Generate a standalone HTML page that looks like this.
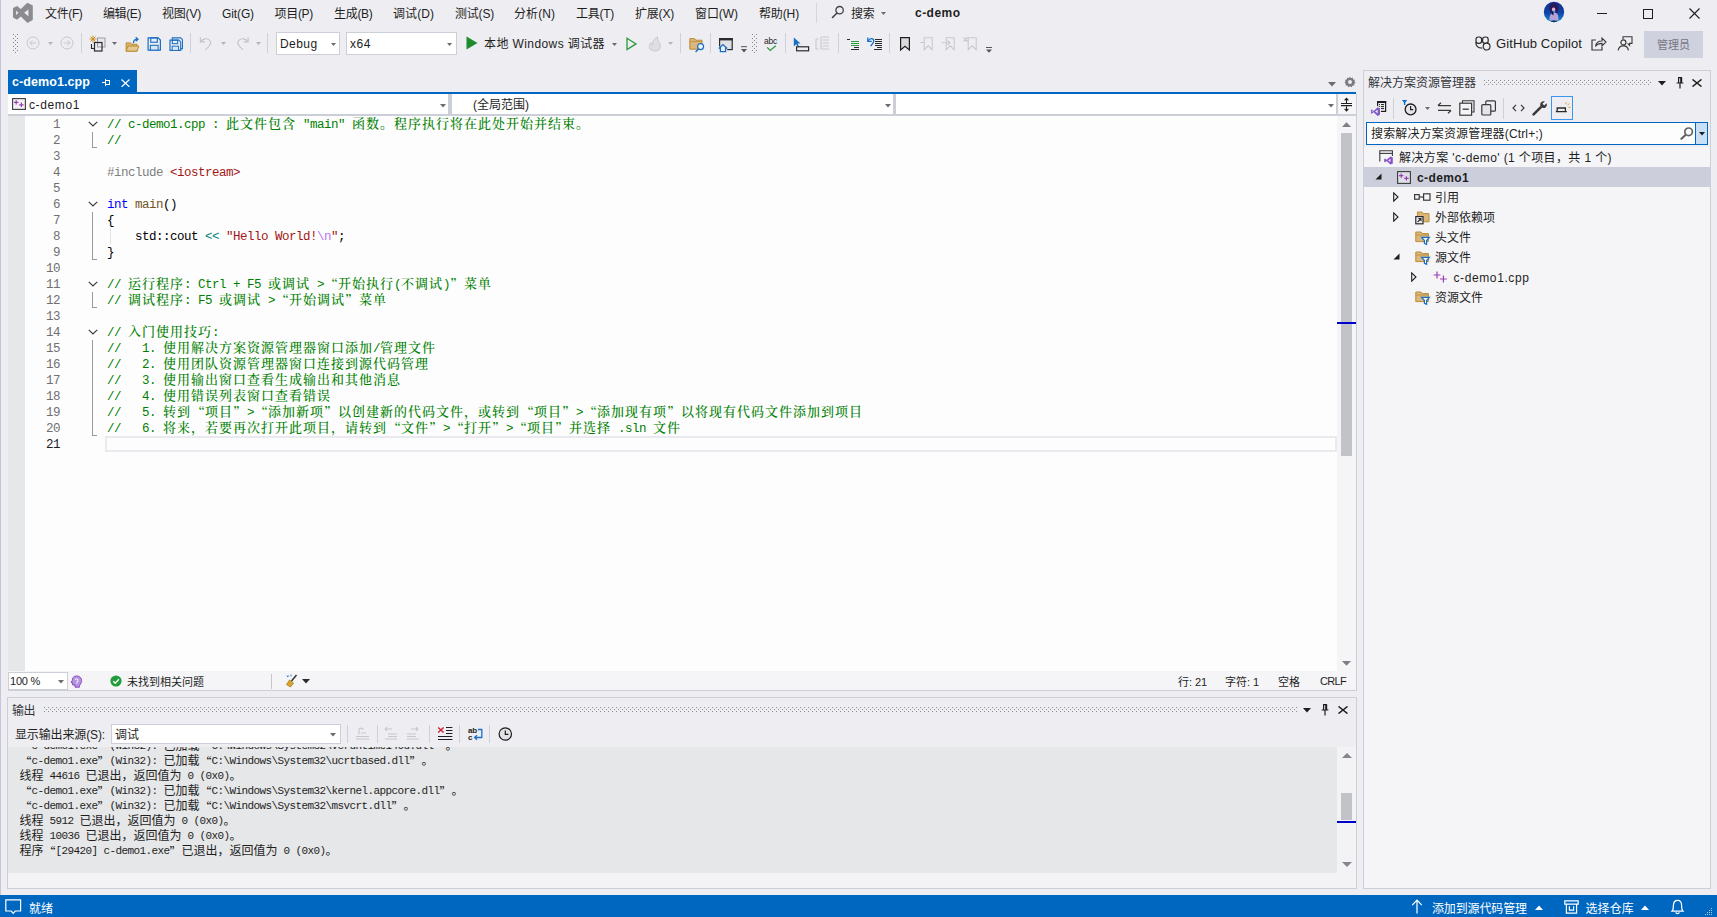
<!DOCTYPE html>
<html lang="zh-CN"><head><meta charset="utf-8"><title>c-demo - Visual Studio</title>
<style>
html,body{margin:0;padding:0}
body{width:1717px;height:917px;overflow:hidden;background:#eeeef2;position:relative;font-family:"Liberation Sans","Noto Sans CJK SC",sans-serif;font-size:12px;color:#1e1e1e}
.a{position:absolute}
.t{position:absolute;white-space:pre}
.m{font-family:"Liberation Mono",monospace}
.s{font-family:"Liberation Serif","Noto Serif CJK SC",serif;font-weight:500}
.g{font-family:"Liberation Sans","Noto Sans CJK SC",sans-serif;font-weight:400}
.qs{font-family:"Noto Serif CJK SC",serif;font-weight:500}
.qg{font-family:"Noto Sans CJK SC",sans-serif}
</style></head>
<body>
<div class="a" style="left:0px;top:0px;width:1px;height:895px;background:#c6c6da;"></div>
<svg class="a" style="left:12px;top:2px" width="22" height="22" viewBox="0 0 22 22"><path d="M15.3 0.8 L20.8 3.6 L20.8 18.1 L15.4 20.9 L8.9 14.6 L5.0 17.8 L1.0 15.6 L1.0 6.1 L5.0 3.9 L8.9 7.1 Z M4.1 8.7 L6.5 10.8 L4.1 13.0 Z M16.4 7.4 L12.2 10.8 L16.4 14.3 Z" fill="#8b8b90" fill-rule="evenodd"/></svg>
<span class="t" id="t0" style="left:45px;top:6.0px;font-size:12px;line-height:16px;color:#1e1e1e;letter-spacing:-0.366px;">文件(F)</span>
<span class="t" id="t1" style="left:103px;top:6.0px;font-size:12px;line-height:16px;color:#1e1e1e;letter-spacing:-0.400px;">编辑(E)</span>
<span class="t" id="t2" style="left:162px;top:6.0px;font-size:12px;line-height:16px;color:#1e1e1e;letter-spacing:-0.200px;">视图(V)</span>
<span class="t" id="t3" style="left:222px;top:6.0px;font-size:12px;line-height:16px;color:#1e1e1e;letter-spacing:-0.112px;">Git(G)</span>
<span class="t" id="t4" style="left:274.5px;top:6.0px;font-size:12px;line-height:16px;color:#1e1e1e;letter-spacing:-0.300px;">项目(P)</span>
<span class="t" id="t5" style="left:334px;top:6.0px;font-size:12px;line-height:16px;color:#1e1e1e;letter-spacing:-0.300px;">生成(B)</span>
<span class="t" id="t6" style="left:393px;top:6.0px;font-size:12px;line-height:16px;color:#1e1e1e;letter-spacing:0.066px;">调试(D)</span>
<span class="t" id="t7" style="left:455px;top:6.0px;font-size:12px;line-height:16px;color:#1e1e1e;letter-spacing:-0.200px;">测试(S)</span>
<span class="t" id="t8" style="left:514px;top:6.0px;font-size:12px;line-height:16px;color:#1e1e1e;letter-spacing:0.066px;">分析(N)</span>
<span class="t" id="t9" style="left:576px;top:6.0px;font-size:12px;line-height:16px;color:#1e1e1e;letter-spacing:-0.266px;">工具(T)</span>
<span class="t" id="t10" style="left:635px;top:6.0px;font-size:12px;line-height:16px;color:#1e1e1e;letter-spacing:-0.200px;">扩展(X)</span>
<span class="t" id="t11" style="left:695px;top:6.0px;font-size:12px;line-height:16px;color:#1e1e1e;letter-spacing:-0.066px;">窗口(W)</span>
<span class="t" id="t12" style="left:759px;top:6.0px;font-size:12px;line-height:16px;color:#1e1e1e;letter-spacing:-0.134px;">帮助(H)</span>
<div class="a" style="left:816px;top:3px;width:1px;height:20px;background:#d6d6de;"></div>
<svg class="a" style="left:831px;top:5px" width="14" height="14" viewBox="0 0 14 14"><circle cx="8.6" cy="5.2" r="3.7" fill="none" stroke="#424242" stroke-width="1.3"/><path d="M6 8 L1.5 12.5" stroke="#424242" stroke-width="1.6" stroke-linecap="round"/></svg>
<span class="t" id="t13" style="left:851px;top:6.0px;font-size:12px;line-height:16px;color:#1e1e1e;letter-spacing:-0.258px;">搜索</span>
<svg class="a" style="left:880.5px;top:12px" width="5" height="3" viewBox="0 0 5 3"><path d="M0 0 H5 L2.5 3 Z" fill="#6a6a72"/></svg>
<span class="t" id="t14" style="left:915px;top:5.0px;font-size:12px;line-height:16px;color:#1e1e1e;font-weight:700;letter-spacing:0.469px;">c-demo</span>
<svg class="a" style="left:1543px;top:1px" width="22" height="22" viewBox="0 0 22 22"><defs><linearGradient id="av" x1="0" y1="0" x2="0" y2="1"><stop offset="0" stop-color="#142a86"/><stop offset="0.55" stop-color="#0f46a8"/><stop offset="1" stop-color="#1296cf"/></linearGradient><clipPath id="avc"><circle cx="11" cy="11" r="10.2"/></clipPath></defs><g clip-path="url(#avc)"><rect width="22" height="22" fill="url(#av)"/><ellipse cx="11" cy="7.2" rx="4.6" ry="5.2" fill="#2a1c58"/><ellipse cx="10.6" cy="8.6" rx="1.7" ry="2" fill="#e3b3cc"/><path d="M10 9.4 L12.4 9.8 L12 12 L10.2 11.4 Z" fill="#4f8fe0"/><path d="M6.4 19.5 C6.4 14.5 8 12 10.4 12.4 C12.2 10.6 15 12.5 15.2 15 L15.6 19.5 Z" fill="#b7a0d8"/><path d="M8.6 13 C8.4 11 9.6 10.2 10.2 11.6 L10.6 14.6 Z" fill="#16153f"/><ellipse cx="11" cy="21.2" rx="3.6" ry="1.6" fill="#0c2a5a"/></g></svg>
<div class="a" style="left:1597px;top:13px;width:10px;height:1px;background:#1e1e1e;"></div>
<div class="a" style="left:1643px;top:9px;width:10px;height:10px;border:1px solid #1e1e1e;box-sizing:border-box;"></div>
<svg class="a" style="left:1689px;top:8px" width="11" height="11" viewBox="0 0 11 11"><path d="M0.5 0.5 L10.5 10.5 M10.5 0.5 L0.5 10.5" stroke="#1e1e1e" stroke-width="1.1"/></svg>
<svg class="a" style="left:13px;top:34px" width="5" height="20" viewBox="0 0 5 20"><rect x="0" y="0" width="1" height="1" fill="#84848e"/><rect x="4" y="0" width="1" height="1" fill="#84848e"/><rect x="2" y="2" width="1" height="1" fill="#84848e"/><rect x="0" y="4" width="1" height="1" fill="#84848e"/><rect x="4" y="4" width="1" height="1" fill="#84848e"/><rect x="2" y="6" width="1" height="1" fill="#84848e"/><rect x="0" y="8" width="1" height="1" fill="#84848e"/><rect x="4" y="8" width="1" height="1" fill="#84848e"/><rect x="2" y="10" width="1" height="1" fill="#84848e"/><rect x="0" y="12" width="1" height="1" fill="#84848e"/><rect x="4" y="12" width="1" height="1" fill="#84848e"/><rect x="2" y="14" width="1" height="1" fill="#84848e"/><rect x="0" y="16" width="1" height="1" fill="#84848e"/><rect x="4" y="16" width="1" height="1" fill="#84848e"/><rect x="2" y="18" width="1" height="1" fill="#84848e"/></svg>
<svg class="a" style="left:25.5px;top:35.5px" width="14" height="14" viewBox="0 0 14 14"><circle cx="7" cy="7" r="6" fill="none" stroke="#c6c6ce"/><path d="M10.2 7 H4 M6.5 4.3 L3.8 7 L6.5 9.7" fill="none" stroke="#c6c6ce"/></svg>
<svg class="a" style="left:47.5px;top:42px" width="5" height="3" viewBox="0 0 5 3"><path d="M0 0 H5 L2.5 3 Z" fill="#b4b4bc"/></svg>
<svg class="a" style="left:59.5px;top:35.5px" width="14" height="14" viewBox="0 0 14 14"><circle cx="7" cy="7" r="6" fill="none" stroke="#c6c6ce"/><path d="M3.8 7 H10 M7.5 4.3 L10.2 7 L7.5 9.7" fill="none" stroke="#c6c6ce"/></svg>
<div class="a" style="left:81px;top:33px;width:1px;height:20px;background:#cfd0da;"></div>
<svg class="a" style="left:89px;top:35px" width="18" height="18" viewBox="0 0 18 18"><path d="M4 0.5 V7.5 M0.5 4 H7.5 M1.5 1.5 L6.5 6.5 M6.5 1.5 L1.5 6.5" stroke="#c78a10" stroke-width="0.9"/><rect x="8.5" y="3" width="7.5" height="9" fill="#e8e8ee" stroke="#9a9aa2" stroke-width="1"/><rect x="5.5" y="7.5" width="7.5" height="8.5" fill="none" stroke="#2a2a2a" stroke-width="1.2"/><path d="M2.5 9 V13.5 H5" fill="none" stroke="#2a2a2a" stroke-width="1.1"/></svg>
<svg class="a" style="left:112.0px;top:42px" width="5" height="3" viewBox="0 0 5 3"><path d="M0 0 H5 L2.5 3 Z" fill="#6a6a72"/></svg>
<svg class="a" style="left:124.5px;top:35.5px" width="15" height="16.5" viewBox="0 0 16 18"><path d="M1 7.5 H6 L7 9 H13 V16.5 H1 Z" fill="#d9b36a" stroke="#b88a2a" stroke-width="1"/><path d="M1 16.5 L3.2 11 H15 L13 16.5 Z" fill="#e3c88f" stroke="#b88a2a" stroke-width="1"/><path d="M9 8 C9 4.5 11 3.5 13.5 3.5 M11.5 1.2 L14 3.5 L11.5 5.8" fill="none" stroke="#1a6fc4" stroke-width="1.4"/></svg>
<svg class="a" style="left:146.5px;top:36.8px" width="14.5" height="14" viewBox="0 0 16 16"><path d="M1 1 H12.5 L15 3.5 V15 H1 Z" fill="none" stroke="#1a6fc4" stroke-width="1.4"/><rect x="4" y="1" width="7.5" height="5" fill="none" stroke="#1a6fc4" stroke-width="1.3"/><rect x="3.6" y="9.5" width="8.8" height="5.5" fill="#dbe6f3" stroke="#1a6fc4" stroke-width="1.2"/></svg>
<svg class="a" style="left:168.7px;top:36.5px" width="14.5" height="14.3" viewBox="0 0 16 16"><path d="M3.5 3 V1 H13 L15 3 V13 H13" fill="none" stroke="#1a6fc4" stroke-width="1.2"/><path d="M1 3.5 H11 L13 5.5 V15 H1 Z" fill="none" stroke="#1a6fc4" stroke-width="1.3"/><rect x="3.6" y="3.5" width="6" height="4" fill="none" stroke="#1a6fc4" stroke-width="1.2"/><rect x="3.4" y="10.3" width="7.2" height="4.7" fill="#dbe6f3" stroke="#1a6fc4" stroke-width="1.1"/></svg>
<div class="a" style="left:190px;top:33px;width:1px;height:20px;background:#cfd0da;"></div>
<svg class="a" style="left:198.5px;top:36.3px" width="14.5" height="14.5" viewBox="0 0 16 16"><path d="M1.5 1.5 V6.5 H6.5" fill="none" stroke="#c2c2ca" stroke-width="1.2"/><path d="M1.8 6.2 C4 3 8.5 1.8 11.5 4.5 C14.5 7.5 12.5 11 7 15" fill="none" stroke="#c2c2ca" stroke-width="1.2"/></svg>
<svg class="a" style="left:220.5px;top:42px" width="5" height="3" viewBox="0 0 5 3"><path d="M0 0 H5 L2.5 3 Z" fill="#b4b4bc"/></svg>
<svg class="a" style="left:234.5px;top:36.3px" width="14.5" height="14.5" viewBox="0 0 16 16"><path d="M14.5 1.5 V6.5 H9.5" fill="none" stroke="#c2c2ca" stroke-width="1.2"/><path d="M14.2 6.2 C12 3 7.5 1.8 4.5 4.5 C1.5 7.5 3.5 11 9 15" fill="none" stroke="#c2c2ca" stroke-width="1.2"/></svg>
<svg class="a" style="left:255.5px;top:42px" width="5" height="3" viewBox="0 0 5 3"><path d="M0 0 H5 L2.5 3 Z" fill="#b4b4bc"/></svg>
<div class="a" style="left:267px;top:33px;width:1px;height:20px;background:#cfd0da;"></div>
<div class="a" style="left:276px;top:32px;width:64px;height:23px;background:#ffffff;border:1px solid #ccced8;box-sizing:border-box;"></div>
<span class="t" id="t15" style="left:280px;top:35.5px;font-size:12px;line-height:16px;color:#1e1e1e;letter-spacing:0.425px;">Debug</span>
<svg class="a" style="left:330.5px;top:43px" width="5" height="3" viewBox="0 0 5 3"><path d="M0 0 H5 L2.5 3 Z" fill="#6a6a72"/></svg>
<div class="a" style="left:346px;top:32px;width:111px;height:23px;background:#ffffff;border:1px solid #ccced8;box-sizing:border-box;"></div>
<span class="t" id="t16" style="left:350px;top:35.5px;font-size:12px;line-height:16px;color:#1e1e1e;letter-spacing:0.547px;">x64</span>
<svg class="a" style="left:447.0px;top:43px" width="5" height="3" viewBox="0 0 5 3"><path d="M0 0 H5 L2.5 3 Z" fill="#6a6a72"/></svg>
<svg class="a" style="left:466px;top:36px" width="12" height="14" viewBox="0 0 12 14"><path d="M0.5 0.5 L11.5 7 L0.5 13.5 Z" fill="#1c8c2c"/></svg>
<span class="t" id="t17" style="left:484px;top:35.5px;font-size:12px;line-height:16px;color:#1e1e1e;letter-spacing:0.403px;">本地 Windows 调试器</span>
<svg class="a" style="left:611.5px;top:43px" width="5" height="3" viewBox="0 0 5 3"><path d="M0 0 H5 L2.5 3 Z" fill="#6a6a72"/></svg>
<svg class="a" style="left:625.5px;top:37px" width="12" height="14" viewBox="0 0 12 14"><path d="M1 1.2 L10 6.9 L1 12.6 Z" fill="none" stroke="#2a9a3a" stroke-width="1.3"/></svg>
<svg class="a" style="left:647px;top:35.5px" width="15" height="16" viewBox="0 0 15 16"><path d="M7.5 15 C2 15 0.8 10 4 6.5 C4.2 8.5 5 9 5.8 9 C5 5.5 7 2.5 10.5 0.8 C9.5 4 13.5 6 13.5 10.5 C13.5 13.5 11 15 7.5 15 Z" fill="#dedee4" stroke="#c6c6ce" stroke-width="0.9"/></svg>
<svg class="a" style="left:668.0px;top:42px" width="5" height="3" viewBox="0 0 5 3"><path d="M0 0 H5 L2.5 3 Z" fill="#b4b4bc"/></svg>
<div class="a" style="left:680px;top:33px;width:1px;height:20px;background:#cfd0da;"></div>
<svg class="a" style="left:689px;top:37px" width="17" height="16" viewBox="0 0 17 16"><path d="M0.8 1.6 H5.6 L6.8 3.2 H13 V12.2 H0.8 Z" fill="#dcb67a" stroke="#b98d3a" stroke-width="1"/><path d="M0.8 4.6 H13" stroke="#b98d3a" stroke-width="0.8"/><circle cx="11.6" cy="9.6" r="3" fill="#f2f5fb" stroke="#1a6fc4" stroke-width="1.2"/><path d="M9.5 11.9 L6.6 15" stroke="#1a6fc4" stroke-width="1.4"/></svg>
<div class="a" style="left:710px;top:33px;width:1px;height:20px;background:#cfd0da;"></div>
<svg class="a" style="left:718px;top:37px" width="16" height="16" viewBox="0 0 16 16"><rect x="1.6" y="1.6" width="12.6" height="11" fill="#e2e2e6" stroke="#2a2a2a" stroke-width="1.2"/><rect x="1" y="1" width="13.8" height="2.4" fill="#2a2a2a"/><path d="M2.2 10.6 H8 V15 H2.2 Z" fill="#eeeef2" stroke="#eeeef2" stroke-width="2.4"/><path d="M0.8 11.4 L5 7.6 L9.2 11.4 M2.4 10.4 V14.6 H7.6 V10.4" fill="none" stroke="#1a6fc4" stroke-width="1.3"/></svg>
<svg class="a" style="left:741px;top:46px" width="6" height="7" viewBox="0 0 6 7"><path d="M0 0.7 H6" stroke="#55555d" stroke-width="1"/><path d="M0 3 H6 L3 6.6 Z" fill="#55555d"/></svg>
<svg class="a" style="left:752px;top:34px" width="5" height="20" viewBox="0 0 5 20"><rect x="0" y="0" width="1" height="1" fill="#84848e"/><rect x="4" y="0" width="1" height="1" fill="#84848e"/><rect x="2" y="2" width="1" height="1" fill="#84848e"/><rect x="0" y="4" width="1" height="1" fill="#84848e"/><rect x="4" y="4" width="1" height="1" fill="#84848e"/><rect x="2" y="6" width="1" height="1" fill="#84848e"/><rect x="0" y="8" width="1" height="1" fill="#84848e"/><rect x="4" y="8" width="1" height="1" fill="#84848e"/><rect x="2" y="10" width="1" height="1" fill="#84848e"/><rect x="0" y="12" width="1" height="1" fill="#84848e"/><rect x="4" y="12" width="1" height="1" fill="#84848e"/><rect x="2" y="14" width="1" height="1" fill="#84848e"/><rect x="0" y="16" width="1" height="1" fill="#84848e"/><rect x="4" y="16" width="1" height="1" fill="#84848e"/><rect x="2" y="18" width="1" height="1" fill="#84848e"/></svg>
<span class="t" id="t18" style="left:764px;top:35.5px;font-size:8.5px;line-height:10px;color:#1e1e1e;letter-spacing:-0.240px;">abc</span>
<svg class="a" style="left:766px;top:45px" width="11" height="7" viewBox="0 0 11 7"><path d="M1.2 2.4 L4.2 5.4 L9.8 0.8" fill="none" stroke="#2a9a3a" stroke-width="1.3"/></svg>
<div class="a" style="left:785px;top:33px;width:1px;height:20px;background:#cfd0da;"></div>
<svg class="a" style="left:793px;top:36.5px" width="17" height="16" viewBox="0 0 17 16"><path d="M0.8 0.6 V9.4 L3.2 7.2 L5 10.6 L6.3 9.9 L4.6 6.6 H7.6 Z" fill="#1a6fc4"/><rect x="3.6" y="9.8" width="12" height="4" fill="#eeeef2" stroke="#2a2a2a" stroke-width="1.2"/></svg>
<svg class="a" style="left:815px;top:36px" width="15" height="16" viewBox="0 0 15 16"><path d="M1 3 V13 M3.5 3 H1 M3.5 13 H1 M6 1 H14 M7.5 4 H14 M7.5 7 H14 M7.5 10 H14 M6 13 H14 M6 1 V13" fill="none" stroke="#c8c8d0" stroke-width="1.1"/></svg>
<div class="a" style="left:838px;top:33px;width:1px;height:20px;background:#cfd0da;"></div>
<svg class="a" style="left:847px;top:39px" width="13" height="11" viewBox="0 0 13 11"><g shape-rendering="crispEdges"><rect x="0" y="0" width="3" height="1" fill="#2a2a2a"/><rect x="4" y="2" width="8" height="1" fill="#2a9a3a"/><rect x="4" y="4" width="8" height="1" fill="#2a9a3a"/><rect x="4" y="6" width="8" height="1" fill="#2a9a3a"/><rect x="7" y="8" width="5" height="1" fill="#2a2a2a"/><rect x="4" y="10" width="8" height="1" fill="#2a2a2a"/></g></svg>
<svg class="a" style="left:866px;top:36px" width="17" height="15" viewBox="0 0 17 15"><path d="M1.8 1.6 V5.4 H5.8" fill="none" stroke="#1a6fc4" stroke-width="1.3"/><path d="M2.2 5 C3.6 1.6 7.8 2 7.8 5 C7.8 7 6.2 8.2 4.6 10" fill="none" stroke="#1a6fc4" stroke-width="1.3"/><g shape-rendering="crispEdges"><rect x="9" y="3" width="7" height="1" fill="#2a2a2a"/><rect x="9" y="5" width="7" height="1" fill="#2a2a2a"/><rect x="9" y="7" width="7" height="1" fill="#2a2a2a"/><rect x="9" y="9" width="7" height="1" fill="#2a2a2a"/><rect x="11" y="11" width="5" height="1" fill="#2a2a2a"/><rect x="8" y="13" width="8" height="1" fill="#2a2a2a"/></g></svg>
<div class="a" style="left:889px;top:33px;width:1px;height:20px;background:#cfd0da;"></div>
<svg class="a" style="left:899px;top:36px" width="12" height="16" viewBox="0 0 12 16"><path d="M1.6 1.6 H10.4 V14 L6 10.2 L1.6 14 Z" fill="#dadade" stroke="#1e1e1e" stroke-width="1.2"/></svg>
<svg class="a" style="left:920px;top:37px" width="14" height="14" viewBox="0 0 14 14"><path d="M4.2 0.8 H12.2 V12.6 L8.2 8.8 L4.2 12.6 Z M0.5 5.5 H4" fill="none" stroke="#c8c8d0" stroke-width="1.1"/></svg>
<svg class="a" style="left:941px;top:37px" width="15" height="14" viewBox="0 0 15 14"><path d="M5.2 0.8 H13.2 V12.6 L9.2 8.8 L5.2 12.6 Z M0.5 5.8 H9 M6.5 3.4 L9 5.8 L6.5 8.2" fill="none" stroke="#c8c8d0" stroke-width="1.1"/></svg>
<svg class="a" style="left:963px;top:37px" width="15" height="14" viewBox="0 0 15 14"><path d="M5.2 0.8 H13.2 V12.6 L9.2 8.8 L5.2 12.6 Z M0.5 0.5 L4.5 4.5 M4.5 0.5 L0.5 4.5" fill="none" stroke="#c8c8d0" stroke-width="1.1"/></svg>
<svg class="a" style="left:985.5px;top:47px" width="6" height="6" viewBox="0 0 6 6"><path d="M0 0.5 H6" stroke="#55555d" stroke-width="1"/><path d="M0 2.5 H6 L3 5.8 Z" fill="#55555d"/></svg>
<svg class="a" style="left:1475px;top:36px" width="16" height="15" viewBox="0 0 16 15"><rect x="1" y="1" width="5.6" height="6.4" rx="2.4" fill="none" stroke="#2a2a2a" stroke-width="1.2"/><rect x="7.6" y="1" width="5.6" height="6.4" rx="2.4" fill="none" stroke="#2a2a2a" stroke-width="1.2"/><path d="M1 6 C0.5 10 3 12.2 7.2 12.2" fill="none" stroke="#2a2a2a" stroke-width="1.2"/><circle cx="11.6" cy="10.6" r="3.4" fill="#eeeef2" stroke="#2a2a2a" stroke-width="1.2"/></svg>
<span class="t" id="t19" style="left:1496px;top:35.5px;font-size:13px;line-height:16px;color:#1e1e1e;letter-spacing:0.104px;">GitHub Copilot</span>
<svg class="a" style="left:1591px;top:36px" width="16" height="15" viewBox="0 0 16 15"><path d="M5 4 H1 V14 H11 V11" fill="none" stroke="#3a3a3a" stroke-width="1.2"/><path d="M4.5 10.5 C5 6.5 8 5 11 5 V2 L15 6 L11 10 V7.4 C8.5 7.4 6.2 8 4.5 10.5 Z" fill="none" stroke="#3a3a3a" stroke-width="1.1"/></svg>
<svg class="a" style="left:1617px;top:36px" width="16" height="15" viewBox="0 0 16 15"><path d="M6 3.2 V0.8 H15 V7.4 H12.6 V9.4 L10.6 7.4" fill="none" stroke="#3a3a3a" stroke-width="1.1"/><circle cx="6.4" cy="6.4" r="2.5" fill="none" stroke="#3a3a3a" stroke-width="1.2"/><path d="M1.2 14.4 C1.6 10.8 4 9.8 6.4 9.8 C8.8 9.8 11 10.8 11.4 14.4" fill="none" stroke="#3a3a3a" stroke-width="1.2"/></svg>
<div class="a" style="left:1644px;top:31px;width:59px;height:27px;background:#d0d1df;"></div>
<span class="t" id="t20" style="left:1657px;top:37.0px;font-size:11px;line-height:16px;color:#76767e;">管理员</span>
<div class="a" style="left:8px;top:70px;width:129px;height:23px;background:#0067c0;"></div>
<span class="t" id="t21" style="left:12px;top:73.5px;font-size:12.5px;line-height:16px;color:#ffffff;font-weight:700;letter-spacing:0.081px;">c-demo1.cpp</span>
<svg class="a" style="left:101px;top:78px" width="10" height="9" viewBox="0 0 10 9"><path d="M1 4.5 H4 M4.5 1 V8 M4 2.5 H9 M8.5 2 V7 M4 6 H9" fill="none" stroke="#ffffff" stroke-width="1" shape-rendering="crispEdges"/><path d="M5 5.5 H8" stroke="#ffffff" stroke-width="1" opacity=".0"/></svg>
<svg class="a" style="left:120.5px;top:79px" width="9" height="8.4" viewBox="0 0 9 8.4"><path d="M0.5 0.5 L8.5 7.9 M8.5 0.5 L0.5 7.9" stroke="#ffffff" stroke-width="1.25"/></svg>
<div class="a" style="left:8px;top:92px;width:1348px;height:2px;background:#0067c0;"></div>
<svg class="a" style="left:1328px;top:82px" width="8" height="5" viewBox="0 0 8 5"><path d="M0 0 H8 L4 4.5 Z" fill="#6a6a72"/><path d="M0 -1.5 H8" stroke="#6a6a72" stroke-width="0"/></svg>
<svg class="a" style="left:1344px;top:76px" width="12" height="12" viewBox="0 0 12 12"><path d="M6 0.6 L7 2.2 L8.8 1.6 L9.2 3.4 L11 3.8 L10.4 5.6 L11.6 6.8 L10.2 7.8 L10.4 9.6 L8.6 9.6 L7.6 11.2 L6 10.2 L4.4 11.2 L3.4 9.6 L1.6 9.6 L1.8 7.8 L0.4 6.8 L1.6 5.6 L1 3.8 L2.8 3.4 L3.2 1.6 L5 2.2 Z" fill="#7a7a84"/><circle cx="6" cy="6" r="2" fill="#eeeef2"/></svg>
<div class="a" style="left:8px;top:94px;width:1349px;height:22px;background:#ccced8;"></div>
<div class="a" style="left:8px;top:94px;width:440px;height:20px;background:#ffffff;"></div>
<div class="a" style="left:452px;top:94px;width:441px;height:20px;background:#ffffff;"></div>
<div class="a" style="left:896px;top:94px;width:440px;height:20px;background:#ffffff;"></div>
<div class="a" style="left:1338px;top:94px;width:18px;height:20px;background:#f5f5f7;"></div>
<svg class="a" style="left:12px;top:98px" width="14" height="12" viewBox="0 0 14 12"><rect x="0.6" y="0.6" width="12.8" height="10.8" fill="#f4f0f6" stroke="#3a3a3a" stroke-width="1.1"/><path d="M4.2 2.2 V6.6 M2 4.4 H6.4 M9.4 4.6 V9 M7.2 6.8 H11.6" stroke="#9b3fb5" stroke-width="1.2"/></svg>
<span class="t" id="t22" style="left:29px;top:96.5px;font-size:12px;line-height:16px;color:#1e1e1e;letter-spacing:0.616px;">c-demo1</span>
<span class="t" id="t23" style="left:473px;top:97.0px;font-size:12px;line-height:16px;color:#1e1e1e;">(全局范围)</span>
<svg class="a" style="left:439.5px;top:104px" width="6" height="4" viewBox="0 0 6 4"><path d="M0 0 H6 L3 3.5 Z" fill="#6a6a72"/></svg>
<svg class="a" style="left:884.5px;top:104px" width="6" height="4" viewBox="0 0 6 4"><path d="M0 0 H6 L3 3.5 Z" fill="#6a6a72"/></svg>
<svg class="a" style="left:1328px;top:104px" width="6" height="4" viewBox="0 0 6 4"><path d="M0 0 H6 L3 3.5 Z" fill="#6a6a72"/></svg>
<svg class="a" style="left:1340px;top:97px" width="14" height="15" viewBox="0 0 14 15"><path d="M1 6.5 H12 M1 8.7 H12" stroke="#1e1e1e" stroke-width="1.2"/><path d="M6.5 6 V1.5 M4.6 3.4 L6.5 1.3 L8.4 3.4 M6.5 9.2 V13.7 M4.6 11.8 L6.5 13.9 L8.4 11.8" fill="none" stroke="#1e1e1e" stroke-width="1.1"/></svg>
<div class="a" style="left:8px;top:116px;width:1348px;height:555px;background:#fdfdfd;"></div>
<div class="a" style="left:8px;top:116px;width:17px;height:555px;background:#e6e7e8;"></div>
<div class="a" style="left:1337px;top:116px;width:19px;height:555px;background:#f5f5f7;"></div>
<div class="a" style="left:1356px;top:94px;width:1px;height:597px;background:#ccced8;"></div>
<div class="a" style="left:1341px;top:133px;width:11px;height:323px;background:#c2c3c9;"></div>
<div class="a" style="left:1337px;top:322px;width:19px;height:2px;background:#0000cd;"></div>
<svg class="a" style="left:1342px;top:122px" width="9" height="5" viewBox="0 0 9 5"><path d="M0 5 H9 L4.5 0.3 Z" fill="#7e7e88"/></svg>
<svg class="a" style="left:1342px;top:661px" width="9" height="5" viewBox="0 0 9 5"><path d="M0 0 H9 L4.5 4.7 Z" fill="#7e7e88"/></svg>
<div class="a" style="left:105px;top:436px;width:1232px;height:16px;border:2px solid #e9e9ef;box-sizing:border-box;"></div>
<span class="t m" style="left:53px;top:117.0px;font-size:12.5px;line-height:16px;color:#707070;letter-spacing:-0.501px">1</span>
<span class="t m" style="left:107px;top:117.0px;font-size:12.5px;line-height:16px;color:#008000;letter-spacing:-0.501px">// c-demo1.cpp : </span>
<span class="t s" style="left:226px;top:116.0px;font-size:13px;line-height:16px;color:#008000;letter-spacing:1.000px">此文件包含</span>
<span class="t m" style="left:296px;top:117.0px;font-size:12.5px;line-height:16px;color:#008000;letter-spacing:-0.501px"> "main" </span>
<span class="t s" style="left:352px;top:116.0px;font-size:13px;line-height:16px;color:#008000;letter-spacing:1.000px">函数。程序执行将在此处开始并结束。</span>
<span class="t m" style="left:53px;top:133.0px;font-size:12.5px;line-height:16px;color:#707070;letter-spacing:-0.501px">2</span>
<span class="t m" style="left:107px;top:133.0px;font-size:12.5px;line-height:16px;color:#008000;letter-spacing:-0.501px">//</span>
<span class="t m" style="left:53px;top:149.0px;font-size:12.5px;line-height:16px;color:#707070;letter-spacing:-0.501px">3</span>
<span class="t m" style="left:53px;top:165.0px;font-size:12.5px;line-height:16px;color:#707070;letter-spacing:-0.501px">4</span>
<span class="t m" style="left:107px;top:165.0px;font-size:12.5px;line-height:16px;color:#808080;letter-spacing:-0.501px">#include </span>
<span class="t m" style="left:170px;top:165.0px;font-size:12.5px;line-height:16px;color:#a31515;letter-spacing:-0.501px">&lt;iostream&gt;</span>
<span class="t m" style="left:53px;top:181.0px;font-size:12.5px;line-height:16px;color:#707070;letter-spacing:-0.501px">5</span>
<span class="t m" style="left:53px;top:197.0px;font-size:12.5px;line-height:16px;color:#707070;letter-spacing:-0.501px">6</span>
<span class="t m" style="left:107px;top:197.0px;font-size:12.5px;line-height:16px;color:#0000ff;letter-spacing:-0.501px">int</span>
<span class="t m" style="left:135px;top:197.0px;font-size:12.5px;line-height:16px;color:#74531f;letter-spacing:-0.501px">main</span>
<span class="t m" style="left:163px;top:197.0px;font-size:12.5px;line-height:16px;color:#000000;letter-spacing:-0.501px">()</span>
<span class="t m" style="left:53px;top:213.0px;font-size:12.5px;line-height:16px;color:#707070;letter-spacing:-0.501px">7</span>
<span class="t m" style="left:107px;top:213.0px;font-size:12.5px;line-height:16px;color:#000000;letter-spacing:-0.501px">{</span>
<span class="t m" style="left:53px;top:229.0px;font-size:12.5px;line-height:16px;color:#707070;letter-spacing:-0.501px">8</span>
<span class="t m" style="left:107px;top:229.0px;font-size:12.5px;line-height:16px;color:#000000;letter-spacing:-0.501px">    std::cout </span>
<span class="t m" style="left:205px;top:229.0px;font-size:12.5px;line-height:16px;color:#008080;letter-spacing:-0.501px">&lt;&lt;</span>
<span class="t m" style="left:226px;top:229.0px;font-size:12.5px;line-height:16px;color:#a31515;letter-spacing:-0.501px">"Hello World!</span>
<span class="t m" style="left:317px;top:229.0px;font-size:12.5px;line-height:16px;color:#b776fb;letter-spacing:-0.501px">\n</span>
<span class="t m" style="left:331px;top:229.0px;font-size:12.5px;line-height:16px;color:#a31515;letter-spacing:-0.501px">"</span>
<span class="t m" style="left:338px;top:229.0px;font-size:12.5px;line-height:16px;color:#000000;letter-spacing:-0.501px">;</span>
<span class="t m" style="left:53px;top:245.0px;font-size:12.5px;line-height:16px;color:#707070;letter-spacing:-0.501px">9</span>
<span class="t m" style="left:107px;top:245.0px;font-size:12.5px;line-height:16px;color:#000000;letter-spacing:-0.501px">}</span>
<span class="t m" style="left:46px;top:261.0px;font-size:12.5px;line-height:16px;color:#707070;letter-spacing:-0.501px">10</span>
<span class="t m" style="left:46px;top:277.0px;font-size:12.5px;line-height:16px;color:#707070;letter-spacing:-0.501px">11</span>
<span class="t m" style="left:107px;top:277.0px;font-size:12.5px;line-height:16px;color:#008000;letter-spacing:-0.501px">// </span>
<span class="t s" style="left:128px;top:276.0px;font-size:13px;line-height:16px;color:#008000;letter-spacing:1.000px">运行程序</span>
<span class="t m" style="left:184px;top:277.0px;font-size:12.5px;line-height:16px;color:#008000;letter-spacing:-0.501px">: Ctrl + F5 </span>
<span class="t s" style="left:268px;top:276.0px;font-size:13px;line-height:16px;color:#008000;letter-spacing:1.000px">或调试</span>
<span class="t m" style="left:310px;top:277.0px;font-size:12.5px;line-height:16px;color:#008000;letter-spacing:-0.501px"> &gt;</span>
<span class="t qs" style="left:324px;top:276.0px;width:14px;text-align:right;font-size:13px;line-height:16px;color:#008000">“</span>
<span class="t s" style="left:338px;top:276.0px;font-size:13px;line-height:16px;color:#008000;letter-spacing:1.000px">开始执行</span>
<span class="t m" style="left:394px;top:277.0px;font-size:12.5px;line-height:16px;color:#008000;letter-spacing:-0.501px">(</span>
<span class="t s" style="left:401px;top:276.0px;font-size:13px;line-height:16px;color:#008000;letter-spacing:1.000px">不调试</span>
<span class="t m" style="left:443px;top:277.0px;font-size:12.5px;line-height:16px;color:#008000;letter-spacing:-0.501px">)</span>
<span class="t qs" style="left:450px;top:276.0px;width:14px;text-align:left;font-size:13px;line-height:16px;color:#008000">”</span>
<span class="t s" style="left:464px;top:276.0px;font-size:13px;line-height:16px;color:#008000;letter-spacing:1.000px">菜单</span>
<span class="t m" style="left:46px;top:293.0px;font-size:12.5px;line-height:16px;color:#707070;letter-spacing:-0.501px">12</span>
<span class="t m" style="left:107px;top:293.0px;font-size:12.5px;line-height:16px;color:#008000;letter-spacing:-0.501px">// </span>
<span class="t s" style="left:128px;top:292.0px;font-size:13px;line-height:16px;color:#008000;letter-spacing:1.000px">调试程序</span>
<span class="t m" style="left:184px;top:293.0px;font-size:12.5px;line-height:16px;color:#008000;letter-spacing:-0.501px">: F5 </span>
<span class="t s" style="left:219px;top:292.0px;font-size:13px;line-height:16px;color:#008000;letter-spacing:1.000px">或调试</span>
<span class="t m" style="left:261px;top:293.0px;font-size:12.5px;line-height:16px;color:#008000;letter-spacing:-0.501px"> &gt;</span>
<span class="t qs" style="left:275px;top:292.0px;width:14px;text-align:right;font-size:13px;line-height:16px;color:#008000">“</span>
<span class="t s" style="left:289px;top:292.0px;font-size:13px;line-height:16px;color:#008000;letter-spacing:1.000px">开始调试</span>
<span class="t qs" style="left:345px;top:292.0px;width:14px;text-align:left;font-size:13px;line-height:16px;color:#008000">”</span>
<span class="t s" style="left:359px;top:292.0px;font-size:13px;line-height:16px;color:#008000;letter-spacing:1.000px">菜单</span>
<span class="t m" style="left:46px;top:309.0px;font-size:12.5px;line-height:16px;color:#707070;letter-spacing:-0.501px">13</span>
<span class="t m" style="left:46px;top:325.0px;font-size:12.5px;line-height:16px;color:#707070;letter-spacing:-0.501px">14</span>
<span class="t m" style="left:107px;top:325.0px;font-size:12.5px;line-height:16px;color:#008000;letter-spacing:-0.501px">// </span>
<span class="t s" style="left:128px;top:324.0px;font-size:13px;line-height:16px;color:#008000;letter-spacing:1.000px">入门使用技巧</span>
<span class="t m" style="left:212px;top:325.0px;font-size:12.5px;line-height:16px;color:#008000;letter-spacing:-0.501px">: </span>
<span class="t m" style="left:46px;top:341.0px;font-size:12.5px;line-height:16px;color:#707070;letter-spacing:-0.501px">15</span>
<span class="t m" style="left:107px;top:341.0px;font-size:12.5px;line-height:16px;color:#008000;letter-spacing:-0.501px">//   1. </span>
<span class="t s" style="left:163px;top:340.0px;font-size:13px;line-height:16px;color:#008000;letter-spacing:1.000px">使用解决方案资源管理器窗口添加</span>
<span class="t m" style="left:373px;top:341.0px;font-size:12.5px;line-height:16px;color:#008000;letter-spacing:-0.501px">/</span>
<span class="t s" style="left:380px;top:340.0px;font-size:13px;line-height:16px;color:#008000;letter-spacing:1.000px">管理文件</span>
<span class="t m" style="left:46px;top:357.0px;font-size:12.5px;line-height:16px;color:#707070;letter-spacing:-0.501px">16</span>
<span class="t m" style="left:107px;top:357.0px;font-size:12.5px;line-height:16px;color:#008000;letter-spacing:-0.501px">//   2. </span>
<span class="t s" style="left:163px;top:356.0px;font-size:13px;line-height:16px;color:#008000;letter-spacing:1.000px">使用团队资源管理器窗口连接到源代码管理</span>
<span class="t m" style="left:46px;top:373.0px;font-size:12.5px;line-height:16px;color:#707070;letter-spacing:-0.501px">17</span>
<span class="t m" style="left:107px;top:373.0px;font-size:12.5px;line-height:16px;color:#008000;letter-spacing:-0.501px">//   3. </span>
<span class="t s" style="left:163px;top:372.0px;font-size:13px;line-height:16px;color:#008000;letter-spacing:1.000px">使用输出窗口查看生成输出和其他消息</span>
<span class="t m" style="left:46px;top:389.0px;font-size:12.5px;line-height:16px;color:#707070;letter-spacing:-0.501px">18</span>
<span class="t m" style="left:107px;top:389.0px;font-size:12.5px;line-height:16px;color:#008000;letter-spacing:-0.501px">//   4. </span>
<span class="t s" style="left:163px;top:388.0px;font-size:13px;line-height:16px;color:#008000;letter-spacing:1.000px">使用错误列表窗口查看错误</span>
<span class="t m" style="left:46px;top:405.0px;font-size:12.5px;line-height:16px;color:#707070;letter-spacing:-0.501px">19</span>
<span class="t m" style="left:107px;top:405.0px;font-size:12.5px;line-height:16px;color:#008000;letter-spacing:-0.501px">//   5. </span>
<span class="t s" style="left:163px;top:404.0px;font-size:13px;line-height:16px;color:#008000;letter-spacing:1.000px">转到</span>
<span class="t qs" style="left:191px;top:404.0px;width:14px;text-align:right;font-size:13px;line-height:16px;color:#008000">“</span>
<span class="t s" style="left:205px;top:404.0px;font-size:13px;line-height:16px;color:#008000;letter-spacing:1.000px">项目</span>
<span class="t qs" style="left:233px;top:404.0px;width:14px;text-align:left;font-size:13px;line-height:16px;color:#008000">”</span>
<span class="t m" style="left:247px;top:405.0px;font-size:12.5px;line-height:16px;color:#008000;letter-spacing:-0.501px">&gt;</span>
<span class="t qs" style="left:254px;top:404.0px;width:14px;text-align:right;font-size:13px;line-height:16px;color:#008000">“</span>
<span class="t s" style="left:268px;top:404.0px;font-size:13px;line-height:16px;color:#008000;letter-spacing:1.000px">添加新项</span>
<span class="t qs" style="left:324px;top:404.0px;width:14px;text-align:left;font-size:13px;line-height:16px;color:#008000">”</span>
<span class="t s" style="left:338px;top:404.0px;font-size:13px;line-height:16px;color:#008000;letter-spacing:1.000px">以创建新的代码文件，或转到</span>
<span class="t qs" style="left:520px;top:404.0px;width:14px;text-align:right;font-size:13px;line-height:16px;color:#008000">“</span>
<span class="t s" style="left:534px;top:404.0px;font-size:13px;line-height:16px;color:#008000;letter-spacing:1.000px">项目</span>
<span class="t qs" style="left:562px;top:404.0px;width:14px;text-align:left;font-size:13px;line-height:16px;color:#008000">”</span>
<span class="t m" style="left:576px;top:405.0px;font-size:12.5px;line-height:16px;color:#008000;letter-spacing:-0.501px">&gt;</span>
<span class="t qs" style="left:583px;top:404.0px;width:14px;text-align:right;font-size:13px;line-height:16px;color:#008000">“</span>
<span class="t s" style="left:597px;top:404.0px;font-size:13px;line-height:16px;color:#008000;letter-spacing:1.000px">添加现有项</span>
<span class="t qs" style="left:667px;top:404.0px;width:14px;text-align:left;font-size:13px;line-height:16px;color:#008000">”</span>
<span class="t s" style="left:681px;top:404.0px;font-size:13px;line-height:16px;color:#008000;letter-spacing:1.000px">以将现有代码文件添加到项目</span>
<span class="t m" style="left:46px;top:421.0px;font-size:12.5px;line-height:16px;color:#707070;letter-spacing:-0.501px">20</span>
<span class="t m" style="left:107px;top:421.0px;font-size:12.5px;line-height:16px;color:#008000;letter-spacing:-0.501px">//   6. </span>
<span class="t s" style="left:163px;top:420.0px;font-size:13px;line-height:16px;color:#008000;letter-spacing:1.000px">将来，若要再次打开此项目，请转到</span>
<span class="t qs" style="left:387px;top:420.0px;width:14px;text-align:right;font-size:13px;line-height:16px;color:#008000">“</span>
<span class="t s" style="left:401px;top:420.0px;font-size:13px;line-height:16px;color:#008000;letter-spacing:1.000px">文件</span>
<span class="t qs" style="left:429px;top:420.0px;width:14px;text-align:left;font-size:13px;line-height:16px;color:#008000">”</span>
<span class="t m" style="left:443px;top:421.0px;font-size:12.5px;line-height:16px;color:#008000;letter-spacing:-0.501px">&gt;</span>
<span class="t qs" style="left:450px;top:420.0px;width:14px;text-align:right;font-size:13px;line-height:16px;color:#008000">“</span>
<span class="t s" style="left:464px;top:420.0px;font-size:13px;line-height:16px;color:#008000;letter-spacing:1.000px">打开</span>
<span class="t qs" style="left:492px;top:420.0px;width:14px;text-align:left;font-size:13px;line-height:16px;color:#008000">”</span>
<span class="t m" style="left:506px;top:421.0px;font-size:12.5px;line-height:16px;color:#008000;letter-spacing:-0.501px">&gt;</span>
<span class="t qs" style="left:513px;top:420.0px;width:14px;text-align:right;font-size:13px;line-height:16px;color:#008000">“</span>
<span class="t s" style="left:527px;top:420.0px;font-size:13px;line-height:16px;color:#008000;letter-spacing:1.000px">项目</span>
<span class="t qs" style="left:555px;top:420.0px;width:14px;text-align:left;font-size:13px;line-height:16px;color:#008000">”</span>
<span class="t s" style="left:569px;top:420.0px;font-size:13px;line-height:16px;color:#008000;letter-spacing:1.000px">并选择</span>
<span class="t m" style="left:611px;top:421.0px;font-size:12.5px;line-height:16px;color:#008000;letter-spacing:-0.501px"> .sln </span>
<span class="t s" style="left:653px;top:420.0px;font-size:13px;line-height:16px;color:#008000;letter-spacing:1.000px">文件</span>
<span class="t m" style="left:46px;top:437.0px;font-size:12.5px;line-height:16px;color:#1e1e1e;letter-spacing:-0.501px">21</span>
<svg class="a" style="left:88px;top:121px" width="10" height="6" viewBox="0 0 10 6"><path d="M0.8 0.8 L5 5 L9.2 0.8" fill="none" stroke="#3a3a3a" stroke-width="1.2"/></svg>
<div class="a" style="left:92px;top:132px;width:1px;height:15px;background:#9a9a9a;"></div>
<div class="a" style="left:92px;top:147px;width:5px;height:1px;background:#9a9a9a;"></div>
<svg class="a" style="left:88px;top:201px" width="10" height="6" viewBox="0 0 10 6"><path d="M0.8 0.8 L5 5 L9.2 0.8" fill="none" stroke="#3a3a3a" stroke-width="1.2"/></svg>
<div class="a" style="left:92px;top:212px;width:1px;height:47px;background:#9a9a9a;"></div>
<div class="a" style="left:92px;top:259px;width:5px;height:1px;background:#9a9a9a;"></div>
<svg class="a" style="left:88px;top:281px" width="10" height="6" viewBox="0 0 10 6"><path d="M0.8 0.8 L5 5 L9.2 0.8" fill="none" stroke="#3a3a3a" stroke-width="1.2"/></svg>
<div class="a" style="left:92px;top:292px;width:1px;height:15px;background:#9a9a9a;"></div>
<div class="a" style="left:92px;top:307px;width:5px;height:1px;background:#9a9a9a;"></div>
<svg class="a" style="left:88px;top:329px" width="10" height="6" viewBox="0 0 10 6"><path d="M0.8 0.8 L5 5 L9.2 0.8" fill="none" stroke="#3a3a3a" stroke-width="1.2"/></svg>
<div class="a" style="left:92px;top:340px;width:1px;height:95px;background:#9a9a9a;"></div>
<div class="a" style="left:92px;top:435px;width:5px;height:1px;background:#9a9a9a;"></div>
<div class="a" style="left:110px;top:228px;width:1px;height:16px;background:#e2e2e2;"></div>
<div class="a" style="left:8px;top:671px;width:1348px;height:19px;background:#f5f5f7;"></div>
<div class="a" style="left:8px;top:690px;width:1349px;height:1px;background:#ccced8;"></div>
<div class="a" style="left:8px;top:672px;width:60px;height:18px;background:#ffffff;border:1px solid #ccced8;box-sizing:border-box;"></div>
<span class="t" id="t24" style="left:10px;top:673.0px;font-size:11px;line-height:16px;color:#1e1e1e;letter-spacing:-0.241px;">100 %</span>
<svg class="a" style="left:58px;top:680px" width="6" height="4" viewBox="0 0 6 4"><path d="M0 0 H6 L3 3.5 Z" fill="#6a6a72"/></svg>
<svg class="a" style="left:70px;top:675px" width="13" height="13" viewBox="0 0 13 13"><path d="M6.6 1 C10 1 12 3.4 11.6 6.4 C11.2 8.8 9.4 9.4 9.4 12.2 H5 V10 H2.6 V7.6 H1 L2.4 5.2 C2.2 3 3.6 1 6.6 1 Z" fill="#b493e0" stroke="#8a4fc0" stroke-width="1"/><path d="M5 4.6 C6 3.4 8.2 4 8 5.6 C7.8 7 6.6 7 6.6 8.6" fill="none" stroke="#f3ecfb" stroke-width="1.1"/></svg>
<svg class="a" style="left:110px;top:675px" width="12" height="12" viewBox="0 0 12 12"><circle cx="6" cy="6" r="5.6" fill="#1f9d3a"/><path d="M3.2 6.2 L5.2 8.2 L8.9 4.2" fill="none" stroke="#fff" stroke-width="1.4"/></svg>
<span class="t" id="t25" style="left:127px;top:674.0px;font-size:11px;line-height:16px;color:#1e1e1e;">未找到相关问题</span>
<div class="a" style="left:271px;top:674px;width:1px;height:15px;background:#c6c6ce;"></div>
<svg class="a" style="left:285px;top:674px" width="13" height="14" viewBox="0 0 13 14"><path d="M11.5 1 L6.5 7" stroke="#3a3a3a" stroke-width="1.6"/><path d="M4.5 6 L8.5 9 L5.5 13 L1.5 10.5 Z" fill="#d9a532" stroke="#a87a1a" stroke-width="0.8"/><path d="M2 1.5 L3.5 3 M3.5 1.5 L2 3 M6 0.5 V2.5" stroke="#1a6fc4" stroke-width="0.9"/></svg>
<svg class="a" style="left:302px;top:679px" width="8" height="5" viewBox="0 0 8 5"><path d="M0 0 H8 L4 4.5 Z" fill="#2a2a2a"/></svg>
<span class="t" id="t26" style="left:1178px;top:674.0px;font-size:11px;line-height:16px;color:#1e1e1e;letter-spacing:-0.072px;">行: 21</span>
<span class="t" id="t27" style="left:1225px;top:674.0px;font-size:11px;line-height:16px;color:#1e1e1e;letter-spacing:-0.047px;">字符: 1</span>
<span class="t" id="t28" style="left:1278px;top:674.0px;font-size:11px;line-height:16px;color:#1e1e1e;">空格</span>
<span class="t" id="t29" style="left:1320px;top:673.0px;font-size:11px;line-height:16px;color:#1e1e1e;letter-spacing:-0.684px;">CRLF</span>
<div class="a" style="left:7px;top:697px;width:1350px;height:192px;background:#eeeef2;border:1px solid #ccced8;box-sizing:border-box;"></div>
<span class="t" id="t30" style="left:12px;top:702.5px;font-size:12px;line-height:16px;color:#33353b;letter-spacing:-0.508px;">输出</span>
<svg class="a" style="left:44px;top:707px" width="1254" height="5" shape-rendering="crispEdges"><defs><pattern id="gp1" width="4" height="4" patternUnits="userSpaceOnUse"><rect x="0" y="0" width="1" height="1" fill="#8c8c94"/><rect x="2" y="2" width="1" height="1" fill="#8c8c94"/></pattern></defs><rect width="1254" height="5" fill="url(#gp1)"/></svg>
<svg class="a" style="left:1303px;top:708px" width="8" height="5" viewBox="0 0 8 5"><path d="M0 0 H8 L4 4.5 Z" fill="#1e1e1e"/></svg>
<svg class="a" style="left:1321px;top:704px" width="8" height="12" viewBox="0 0 8 12"><path d="M2 0.6 H6 M2.6 0.6 V5.8 M5.6 0.6 V5.8 M0.6 6 H7.4 M4 6 V11.5" fill="none" stroke="#1e1e1e" stroke-width="1.2"/><path d="M5 0.6 V6" stroke="#1e1e1e" stroke-width="1.6"/></svg>
<svg class="a" style="left:1338px;top:706px" width="10" height="8" viewBox="0 0 10 8"><path d="M0.5 0.4 L9.5 7.6 M9.5 0.4 L0.5 7.6" stroke="#1e1e1e" stroke-width="1.4"/></svg>
<span class="t" id="t31" style="left:15px;top:726.5px;font-size:12px;line-height:16px;color:#1e1e1e;letter-spacing:-0.134px;">显示输出来源(S):</span>
<div class="a" style="left:111px;top:724px;width:230px;height:20px;background:#ffffff;border:1px solid #ccced8;box-sizing:border-box;"></div>
<span class="t" id="t32" style="left:115px;top:726.5px;font-size:12px;line-height:16px;color:#1e1e1e;letter-spacing:-0.008px;">调试</span>
<svg class="a" style="left:330px;top:733px" width="6" height="4" viewBox="0 0 6 4"><path d="M0 0 H6 L3 3.5 Z" fill="#6a6a72"/></svg>
<div class="a" style="left:347px;top:725px;width:1px;height:18px;background:#cfd0da;"></div>
<svg class="a" style="left:355px;top:726px" width="15" height="15" viewBox="0 0 15 15"><path d="M4 8.5 V4 C4 1.5 8 1.5 8 4 M1 10.5 H14 M1 13 H14 M6 7 H11" fill="none" stroke="#c6c6ce" stroke-width="1.1"/></svg>
<div class="a" style="left:377px;top:725px;width:1px;height:18px;background:#cfd0da;"></div>
<svg class="a" style="left:384px;top:726px" width="14" height="15" viewBox="0 0 14 15"><path d="M1 3 H8 M1 3 L3 1.2 M1 3 L3 4.8 M4 8 H13 M4 10.5 H13 M1 13 H13" fill="none" stroke="#c6c6ce" stroke-width="1.1"/></svg>
<svg class="a" style="left:406px;top:726px" width="14" height="15" viewBox="0 0 14 15"><path d="M5 3 H12 M12 3 L10 1.2 M12 3 L10 4.8 M1 8 H10 M1 10.5 H10 M1 13 H13" fill="none" stroke="#c6c6ce" stroke-width="1.1"/></svg>
<div class="a" style="left:429px;top:725px;width:1px;height:18px;background:#cfd0da;"></div>
<svg class="a" style="left:437px;top:726px" width="16" height="15" viewBox="0 0 16 15"><path d="M1.2 1.4 L6.6 6.6 M6.6 1.4 L1.2 6.6" stroke="#d0202a" stroke-width="1.4"/><path d="M9 1.5 H15.4 M9 4.5 H15.4 M9 7.5 H15.4 M1 10.5 H15.4 M1 13.5 H15.4" stroke="#1e1e1e" stroke-width="1.1"/></svg>
<div class="a" style="left:459px;top:725px;width:1px;height:18px;background:#cfd0da;"></div>
<span class="t" id="t33" style="left:468px;top:725.5px;font-size:8px;line-height:9px;color:#1e1e1e;font-weight:700;letter-spacing:-0.172px;">ab</span>
<span class="t" id="t34" style="left:468px;top:733.0px;font-size:8px;line-height:9px;color:#1e1e1e;font-weight:700;">c</span>
<svg class="a" style="left:473px;top:727px" width="10" height="14" viewBox="0 0 10 14"><path d="M5 2.5 H8.8 V10.5 H2 M4 8.2 L1.6 10.5 L4 12.8" fill="none" stroke="#1a6fc4" stroke-width="1.3"/></svg>
<div class="a" style="left:489px;top:725px;width:1px;height:18px;background:#cfd0da;"></div>
<svg class="a" style="left:498px;top:727px" width="15" height="15" viewBox="0 0 15 15"><circle cx="7.3" cy="7" r="6.2" fill="#e2e2e6" stroke="#1e1e1e" stroke-width="1.2"/><path d="M7.3 3.4 V7.3 H10.4" fill="none" stroke="#1e1e1e" stroke-width="1.2"/></svg>
<div class="a" id="outpane" style="left:8px;top:747px;width:1329px;height:126px;background:#e6e7e8;overflow:hidden"><span class="t qg" style="left:11.5px;top:-8.5px;width:12px;text-align:right;font-size:12px;line-height:15px;color:#1e1e1e">“</span>
<span class="t m" style="left:23.5px;top:-8.0px;font-size:11px;line-height:15px;color:#1e1e1e;letter-spacing:-0.601px">c-demo1.exe</span>
<span class="t qg" style="left:89.5px;top:-8.5px;width:12px;text-align:left;font-size:12px;line-height:15px;color:#1e1e1e">”</span>
<span class="t m" style="left:101.5px;top:-8.0px;font-size:11px;line-height:15px;color:#1e1e1e;letter-spacing:-0.601px">(Win32): </span>
<span class="t g" style="left:155.5px;top:-8.5px;font-size:12px;line-height:15px;color:#1e1e1e;letter-spacing:0.000px">已加载</span>
<span class="t qg" style="left:191.5px;top:-8.5px;width:12px;text-align:right;font-size:12px;line-height:15px;color:#1e1e1e">“</span>
<span class="t m" style="left:203.5px;top:-8.0px;font-size:11px;line-height:15px;color:#1e1e1e;letter-spacing:-0.601px">C:\Windows\System32\vcruntime140d.dll</span>
<span class="t qg" style="left:425.5px;top:-8.5px;width:12px;text-align:left;font-size:12px;line-height:15px;color:#1e1e1e">”</span>
<span class="t g" style="left:437.5px;top:-8.5px;font-size:12px;line-height:15px;color:#1e1e1e;letter-spacing:0.000px">。</span>
<span class="t qg" style="left:11.5px;top:6.5px;width:12px;text-align:right;font-size:12px;line-height:15px;color:#1e1e1e">“</span>
<span class="t m" style="left:23.5px;top:7.0px;font-size:11px;line-height:15px;color:#1e1e1e;letter-spacing:-0.601px">c-demo1.exe</span>
<span class="t qg" style="left:89.5px;top:6.5px;width:12px;text-align:left;font-size:12px;line-height:15px;color:#1e1e1e">”</span>
<span class="t m" style="left:101.5px;top:7.0px;font-size:11px;line-height:15px;color:#1e1e1e;letter-spacing:-0.601px">(Win32): </span>
<span class="t g" style="left:155.5px;top:6.5px;font-size:12px;line-height:15px;color:#1e1e1e;letter-spacing:0.000px">已加载</span>
<span class="t qg" style="left:191.5px;top:6.5px;width:12px;text-align:right;font-size:12px;line-height:15px;color:#1e1e1e">“</span>
<span class="t m" style="left:203.5px;top:7.0px;font-size:11px;line-height:15px;color:#1e1e1e;letter-spacing:-0.601px">C:\Windows\System32\ucrtbased.dll</span>
<span class="t qg" style="left:401.5px;top:6.5px;width:12px;text-align:left;font-size:12px;line-height:15px;color:#1e1e1e">”</span>
<span class="t g" style="left:413.5px;top:6.5px;font-size:12px;line-height:15px;color:#1e1e1e;letter-spacing:0.000px">。</span>
<span class="t g" style="left:11.5px;top:21.5px;font-size:12px;line-height:15px;color:#1e1e1e;letter-spacing:0.000px">线程</span>
<span class="t m" style="left:35.5px;top:22.0px;font-size:11px;line-height:15px;color:#1e1e1e;letter-spacing:-0.601px"> 44616 </span>
<span class="t g" style="left:77.5px;top:21.5px;font-size:12px;line-height:15px;color:#1e1e1e;letter-spacing:0.000px">已退出，返回值为</span>
<span class="t m" style="left:173.5px;top:22.0px;font-size:11px;line-height:15px;color:#1e1e1e;letter-spacing:-0.601px"> 0 (0x0)</span>
<span class="t g" style="left:221.5px;top:21.5px;font-size:12px;line-height:15px;color:#1e1e1e;letter-spacing:0.000px">。</span>
<span class="t qg" style="left:11.5px;top:36.5px;width:12px;text-align:right;font-size:12px;line-height:15px;color:#1e1e1e">“</span>
<span class="t m" style="left:23.5px;top:37.0px;font-size:11px;line-height:15px;color:#1e1e1e;letter-spacing:-0.601px">c-demo1.exe</span>
<span class="t qg" style="left:89.5px;top:36.5px;width:12px;text-align:left;font-size:12px;line-height:15px;color:#1e1e1e">”</span>
<span class="t m" style="left:101.5px;top:37.0px;font-size:11px;line-height:15px;color:#1e1e1e;letter-spacing:-0.601px">(Win32): </span>
<span class="t g" style="left:155.5px;top:36.5px;font-size:12px;line-height:15px;color:#1e1e1e;letter-spacing:0.000px">已加载</span>
<span class="t qg" style="left:191.5px;top:36.5px;width:12px;text-align:right;font-size:12px;line-height:15px;color:#1e1e1e">“</span>
<span class="t m" style="left:203.5px;top:37.0px;font-size:11px;line-height:15px;color:#1e1e1e;letter-spacing:-0.601px">C:\Windows\System32\kernel.appcore.dll</span>
<span class="t qg" style="left:431.5px;top:36.5px;width:12px;text-align:left;font-size:12px;line-height:15px;color:#1e1e1e">”</span>
<span class="t g" style="left:443.5px;top:36.5px;font-size:12px;line-height:15px;color:#1e1e1e;letter-spacing:0.000px">。</span>
<span class="t qg" style="left:11.5px;top:51.5px;width:12px;text-align:right;font-size:12px;line-height:15px;color:#1e1e1e">“</span>
<span class="t m" style="left:23.5px;top:52.0px;font-size:11px;line-height:15px;color:#1e1e1e;letter-spacing:-0.601px">c-demo1.exe</span>
<span class="t qg" style="left:89.5px;top:51.5px;width:12px;text-align:left;font-size:12px;line-height:15px;color:#1e1e1e">”</span>
<span class="t m" style="left:101.5px;top:52.0px;font-size:11px;line-height:15px;color:#1e1e1e;letter-spacing:-0.601px">(Win32): </span>
<span class="t g" style="left:155.5px;top:51.5px;font-size:12px;line-height:15px;color:#1e1e1e;letter-spacing:0.000px">已加载</span>
<span class="t qg" style="left:191.5px;top:51.5px;width:12px;text-align:right;font-size:12px;line-height:15px;color:#1e1e1e">“</span>
<span class="t m" style="left:203.5px;top:52.0px;font-size:11px;line-height:15px;color:#1e1e1e;letter-spacing:-0.601px">C:\Windows\System32\msvcrt.dll</span>
<span class="t qg" style="left:383.5px;top:51.5px;width:12px;text-align:left;font-size:12px;line-height:15px;color:#1e1e1e">”</span>
<span class="t g" style="left:395.5px;top:51.5px;font-size:12px;line-height:15px;color:#1e1e1e;letter-spacing:0.000px">。</span>
<span class="t g" style="left:11.5px;top:66.5px;font-size:12px;line-height:15px;color:#1e1e1e;letter-spacing:0.000px">线程</span>
<span class="t m" style="left:35.5px;top:67.0px;font-size:11px;line-height:15px;color:#1e1e1e;letter-spacing:-0.601px"> 5912 </span>
<span class="t g" style="left:71.5px;top:66.5px;font-size:12px;line-height:15px;color:#1e1e1e;letter-spacing:0.000px">已退出，返回值为</span>
<span class="t m" style="left:167.5px;top:67.0px;font-size:11px;line-height:15px;color:#1e1e1e;letter-spacing:-0.601px"> 0 (0x0)</span>
<span class="t g" style="left:215.5px;top:66.5px;font-size:12px;line-height:15px;color:#1e1e1e;letter-spacing:0.000px">。</span>
<span class="t g" style="left:11.5px;top:81.5px;font-size:12px;line-height:15px;color:#1e1e1e;letter-spacing:0.000px">线程</span>
<span class="t m" style="left:35.5px;top:82.0px;font-size:11px;line-height:15px;color:#1e1e1e;letter-spacing:-0.601px"> 10036 </span>
<span class="t g" style="left:77.5px;top:81.5px;font-size:12px;line-height:15px;color:#1e1e1e;letter-spacing:0.000px">已退出，返回值为</span>
<span class="t m" style="left:173.5px;top:82.0px;font-size:11px;line-height:15px;color:#1e1e1e;letter-spacing:-0.601px"> 0 (0x0)</span>
<span class="t g" style="left:221.5px;top:81.5px;font-size:12px;line-height:15px;color:#1e1e1e;letter-spacing:0.000px">。</span>
<span class="t g" style="left:11.5px;top:96.5px;font-size:12px;line-height:15px;color:#1e1e1e;letter-spacing:0.000px">程序</span>
<span class="t qg" style="left:35.5px;top:96.5px;width:12px;text-align:right;font-size:12px;line-height:15px;color:#1e1e1e">“</span>
<span class="t m" style="left:47.5px;top:97.0px;font-size:11px;line-height:15px;color:#1e1e1e;letter-spacing:-0.601px">[29420] c-demo1.exe</span>
<span class="t qg" style="left:161.5px;top:96.5px;width:12px;text-align:left;font-size:12px;line-height:15px;color:#1e1e1e">”</span>
<span class="t g" style="left:173.5px;top:96.5px;font-size:12px;line-height:15px;color:#1e1e1e;letter-spacing:0.000px">已退出，返回值为</span>
<span class="t m" style="left:269.5px;top:97.0px;font-size:11px;line-height:15px;color:#1e1e1e;letter-spacing:-0.601px"> 0 (0x0)</span>
<span class="t g" style="left:317.5px;top:96.5px;font-size:12px;line-height:15px;color:#1e1e1e;letter-spacing:0.000px">。</span></div>
<div class="a" style="left:8px;top:873px;width:1348px;height:15px;background:#f3f3f5;"></div>
<div class="a" style="left:1337px;top:747px;width:19px;height:126px;background:#f3f3f5;"></div>
<div class="a" style="left:1341px;top:793px;width:11px;height:27px;background:#c2c3c9;"></div>
<div class="a" style="left:1337px;top:821px;width:19px;height:2px;background:#0000cd;"></div>
<svg class="a" style="left:1342px;top:753px" width="10" height="5" viewBox="0 0 10 5"><path d="M0 5 H10 L5 0 Z" fill="#86868f"/></svg>
<svg class="a" style="left:1342px;top:862px" width="10" height="5" viewBox="0 0 10 5"><path d="M0 0 H10 L5 5 Z" fill="#86868f"/></svg>
<div class="a" style="left:1363px;top:70px;width:348px;height:819px;background:#f5f5f7;border:1px solid #ccced8;box-sizing:border-box;"></div>
<div class="a" style="left:1364px;top:71px;width:346px;height:76px;background:#eeeef2;"></div>
<span class="t" id="t35" style="left:1368px;top:74.5px;font-size:12px;line-height:16px;color:#33353b;letter-spacing:-0.002px;">解决方案资源管理器</span>
<svg class="a" style="left:1484px;top:80px" width="167" height="5" shape-rendering="crispEdges"><defs><pattern id="gp2" width="4" height="4" patternUnits="userSpaceOnUse"><rect x="0" y="0" width="1" height="1" fill="#8c8c94"/><rect x="2" y="2" width="1" height="1" fill="#8c8c94"/></pattern></defs><rect width="167" height="5" fill="url(#gp2)"/></svg>
<svg class="a" style="left:1658px;top:81px" width="8" height="5" viewBox="0 0 8 5"><path d="M0 0 H8 L4 4.5 Z" fill="#1e1e1e"/></svg>
<svg class="a" style="left:1676px;top:77px" width="8" height="12" viewBox="0 0 8 12"><path d="M2 0.6 H6 M2.6 0.6 V5.8 M5.6 0.6 V5.8 M0.6 6 H7.4 M4 6 V11.5" fill="none" stroke="#1e1e1e" stroke-width="1.2"/><path d="M5 0.6 V6" stroke="#1e1e1e" stroke-width="1.6"/></svg>
<svg class="a" style="left:1692px;top:79px" width="10" height="8" viewBox="0 0 10 8"><path d="M0.5 0.4 L9.5 7.6 M9.5 0.4 L0.5 7.6" stroke="#1e1e1e" stroke-width="1.4"/></svg>
<svg class="a" style="left:1370px;top:100px" width="18" height="17" viewBox="0 0 18 17"><rect x="7.6" y="1.6" width="8" height="9.8" fill="none" stroke="#1e1e1e" stroke-width="1.2"/><rect x="7" y="1" width="9.2" height="2" fill="#1e1e1e"/><path d="M11 4.6 H14 M11 6.6 H14 M11 8.6 H14" stroke="#1e1e1e" stroke-width="1"/><path d="M9 4.6 H10 M9 6.6 H10" stroke="#1e1e1e" stroke-width="1"/><g transform="translate(0.3,6.6) scale(0.47)"><path d="M15.6 1.2 L20.6 3.4 V17.6 L15.6 19.8 L7 11.9 L3.2 15 L1.4 14.1 V6.9 L3.2 6 L7 9.1 Z M15.6 6.6 L10.3 10.5 L15.6 14.4 Z M3.4 8.6 V12.4 L5.5 10.5 Z" fill="#eeeef2" stroke="#eeeef2" stroke-width="4"/><path d="M15.6 1.2 L20.6 3.4 V17.6 L15.6 19.8 L7 11.9 L3.2 15 L1.4 14.1 V6.9 L3.2 6 L7 9.1 Z M15.6 6.6 L10.3 10.5 L15.6 14.4 Z M3.4 8.6 V12.4 L5.5 10.5 Z" fill="#7f5cc6" fill-rule="evenodd"/></g></svg>
<div class="a" style="left:1393px;top:98px;width:1px;height:21px;background:#cfd0da;"></div>
<svg class="a" style="left:1401px;top:99px" width="17" height="18" viewBox="0 0 17 18"><path d="M1 1 H6.2 L4.3 3.4 V6 H2.9 V3.4 Z" fill="#0b6fd0"/><circle cx="9.6" cy="10.4" r="5.4" fill="#e6e6ea" stroke="#1e1e1e" stroke-width="1.3"/><path d="M9.6 7 V10.7 H12.2" fill="none" stroke="#1e1e1e" stroke-width="1.2"/></svg>
<svg class="a" style="left:1424.5px;top:107px" width="5" height="3" viewBox="0 0 5 3"><path d="M0 0 H5 L2.5 3 Z" fill="#6a6a72"/></svg>
<svg class="a" style="left:1437px;top:102px" width="15" height="12" viewBox="0 0 15 12"><path d="M1 3.6 H14 M1 3.6 L4 0.8 M1 8.4 H14 M14 8.4 L11 11.2" fill="none" stroke="#3a3a3a" stroke-width="1.3"/></svg>
<svg class="a" style="left:1459px;top:100px" width="16" height="16" viewBox="0 0 16 16"><path d="M3.5 3 V0.8 H15 V12 H12.8" fill="none" stroke="#3a3a3a" stroke-width="1.1"/><rect x="0.8" y="3.2" width="11.8" height="12" fill="#f5f5f7" stroke="#3a3a3a" stroke-width="1.2"/><path d="M3.6 9.2 H9.8" stroke="#3a3a3a" stroke-width="1.3"/></svg>
<svg class="a" style="left:1481px;top:100px" width="16" height="16" viewBox="0 0 16 16"><rect x="4.8" y="0.8" width="9.6" height="10.4" rx="1" fill="none" stroke="#3a3a3a" stroke-width="1.2"/><rect x="0.8" y="4.6" width="9" height="10.4" rx="1" fill="#e4e4ea" stroke="#3a3a3a" stroke-width="1.2"/></svg>
<div class="a" style="left:1503px;top:98px;width:1px;height:21px;background:#cfd0da;"></div>
<svg class="a" style="left:1512px;top:104px" width="13" height="8" viewBox="0 0 13 8"><path d="M4 0.8 L1 4 L4 7.2 M9 0.8 L12 4 L9 7.2" fill="none" stroke="#3a3a3a" stroke-width="1.2"/></svg>
<svg class="a" style="left:1532px;top:100px" width="16" height="16" viewBox="0 0 16 16"><path d="M1.6 14.4 L8.6 7.4" stroke="#3a3a3a" stroke-width="2.6" stroke-linecap="round"/><path d="M14.6 3.2 L12.2 5.6 L10.4 3.8 L12.8 1.4 C10.6 0.6 8 2.2 8.2 5 C8.4 7.6 11.4 8.8 13.6 7.4 C14.8 6.4 15.2 4.6 14.6 3.2 Z" fill="#3a3a3a"/></svg>
<div class="a" style="left:1551px;top:96px;width:22px;height:24px;border:1px solid #3a96f0;box-sizing:border-box;"></div>
<svg class="a" style="left:1555px;top:102px" width="16" height="12" viewBox="0 0 16 12"><path d="M0.8 9.6 H11.8 M2.2 9.4 V6 H10.4 V9.4" fill="none" stroke="#2a2a2a" stroke-width="1.3"/><path d="M12.6 3.2 L14.4 1.4 M13.4 5.4 H15.6 M11 2.2 V0.4" stroke="#d9a532" stroke-width="1"/></svg>
<div class="a" style="left:1366px;top:122px;width:342px;height:23px;background:#fdfdfd;border:1px solid #0067c0;box-sizing:border-box;"></div>
<div class="a" style="left:1695px;top:123px;width:12px;height:21px;background:#c9dff5;"></div>
<div class="a" style="left:1695px;top:123px;width:1px;height:21px;background:#0067c0;"></div>
<span class="t" id="t36" style="left:1371px;top:125.5px;font-size:12px;line-height:16px;color:#1e1e1e;letter-spacing:0.158px;">搜索解决方案资源管理器(Ctrl+;)</span>
<svg class="a" style="left:1679px;top:126px" width="15" height="15" viewBox="0 0 15 15"><circle cx="9.6" cy="5.8" r="3.8" fill="none" stroke="#646464" stroke-width="1.7"/><path d="M6.8 8.8 L2.4 12.8" stroke="#646464" stroke-width="2.2" stroke-linecap="round"/></svg>
<svg class="a" style="left:1698.5px;top:132px" width="6" height="4" viewBox="0 0 6 4"><path d="M0 0 H6 L3 3.6 Z" fill="#1e1e1e"/></svg>
<div class="a" style="left:1364px;top:167px;width:346px;height:20px;background:#ccceDB;"></div>
<svg class="a" style="left:1379px;top:150px" width="15" height="15" viewBox="0 0 15 15"><path d="M0.8 11.5 V0.8 H13.4 V6" fill="none" stroke="#3a3a3a" stroke-width="1.1"/><path d="M0.8 3.4 H13.4" stroke="#3a3a3a" stroke-width="1.1"/><path d="M11.4 6.4 L13.8 7.4 V13.4 L11.4 14.4 L7.6 11 L6 12.3 L5.2 11.9 V8.9 L6 8.5 L7.6 9.8 Z M11.4 8.8 L9.2 10.4 L11.4 12 Z" fill="#8a52c8" fill-rule="evenodd"/></svg>
<span class="t" id="t37" style="left:1399px;top:150.0px;font-size:12px;line-height:16px;color:#1e1e1e;letter-spacing:0.385px;">解决方案 'c-demo' (1 个项目，共 1 个)</span>
<svg class="a" style="left:1375px;top:173px" width="7" height="7" viewBox="0 0 7 7"><path d="M6.5 0.5 V6.5 H0.5 Z" fill="#1e1e1e"/></svg>
<svg class="a" style="left:1397px;top:171px" width="14" height="13" viewBox="0 0 14 13"><rect x="0.6" y="0.6" width="12.8" height="11.8" fill="#dedee8" stroke="#3a3a3a" stroke-width="1.1"/><path d="M4.2 2.4 V6.8 M2 4.6 H6.4 M9.4 5.2 V9.6 M7.2 7.4 H11.6" stroke="#9b3fb5" stroke-width="1.2"/></svg>
<span class="t" id="t38" style="left:1417px;top:170.0px;font-size:12px;line-height:16px;color:#1e1e1e;font-weight:700;letter-spacing:0.377px;">c-demo1</span>
<svg class="a" style="left:1393px;top:192px" width="6" height="10" viewBox="0 0 6 10"><path d="M0.7 0.8 L5 5 L0.7 9.2 Z" fill="none" stroke="#1e1e1e" stroke-width="1.1"/></svg>
<svg class="a" style="left:1414px;top:193px" width="17" height="8" viewBox="0 0 17 8"><rect x="0.6" y="1.6" width="4.6" height="4.6" fill="none" stroke="#3a3a3a" stroke-width="1.2"/><path d="M5.2 4 H9.4" stroke="#3a3a3a" stroke-width="1.2"/><rect x="9.6" y="0.8" width="6.4" height="6.4" fill="none" stroke="#3a3a3a" stroke-width="1.2"/></svg>
<span class="t" id="t39" style="left:1435px;top:190.0px;font-size:12px;line-height:16px;color:#1e1e1e;letter-spacing:-0.008px;">引用</span>
<svg class="a" style="left:1393px;top:212px" width="6" height="10" viewBox="0 0 6 10"><path d="M0.7 0.8 L5 5 L0.7 9.2 Z" fill="none" stroke="#1e1e1e" stroke-width="1.1"/></svg>
<svg class="a" style="left:1415px;top:210px" width="16" height="16" viewBox="0 0 16 16"><path d="M2.4 6.6 V2 H7 L8.2 3.6 H14 V11.8 H8.4" fill="#dcb67a" stroke="#b98d3a" stroke-width="1"/><rect x="0.8" y="6.6" width="7.2" height="7.2" fill="#f5f5f7" stroke="#2a2a2a" stroke-width="1.2"/><path d="M2.6 12 L5.8 8.8 M3.4 8.6 H6 V11.2" fill="none" stroke="#2a2a2a" stroke-width="1.1"/></svg>
<span class="t" id="t40" style="left:1435px;top:210.0px;font-size:12px;line-height:16px;color:#1e1e1e;letter-spacing:-0.003px;">外部依赖项</span>
<svg class="a" style="left:1415px;top:230px" width="16" height="16" viewBox="0 0 16 16"><path d="M0.8 2 H6 L7.2 3.6 H13.4 V11.6 H0.8 Z" fill="#dcb67a" stroke="#b98d3a" stroke-width="1"/><path d="M0.8 5 H13.4" stroke="#b98d3a" stroke-width="0.8"/><path d="M6.6 7.4 H14.4 L11.6 10.6 V14.4 L9.4 13.4 V10.6 Z" fill="#f5f5f7" stroke="#1a6fc4" stroke-width="1.2"/></svg>
<span class="t" id="t41" style="left:1435px;top:230.0px;font-size:12px;line-height:16px;color:#1e1e1e;letter-spacing:-0.005px;">头文件</span>
<svg class="a" style="left:1393px;top:253px" width="7" height="7" viewBox="0 0 7 7"><path d="M6.5 0.5 V6.5 H0.5 Z" fill="#1e1e1e"/></svg>
<svg class="a" style="left:1415px;top:250px" width="16" height="16" viewBox="0 0 16 16"><path d="M0.8 2 H6 L7.2 3.6 H13.4 V11.6 H0.8 Z" fill="#dcb67a" stroke="#b98d3a" stroke-width="1"/><path d="M0.8 5 H13.4" stroke="#b98d3a" stroke-width="0.8"/><path d="M6.6 7.4 H14.4 L11.6 10.6 V14.4 L9.4 13.4 V10.6 Z" fill="#f5f5f7" stroke="#1a6fc4" stroke-width="1.2"/></svg>
<span class="t" id="t42" style="left:1435px;top:250.0px;font-size:12px;line-height:16px;color:#1e1e1e;letter-spacing:-0.005px;">源文件</span>
<svg class="a" style="left:1411px;top:272px" width="6" height="10" viewBox="0 0 6 10"><path d="M0.7 0.8 L5 5 L0.7 9.2 Z" fill="none" stroke="#1e1e1e" stroke-width="1.1"/></svg>
<svg class="a" style="left:1433px;top:271px" width="15" height="13" viewBox="0 0 15 13"><path d="M4 0.6 V7.4 M0.6 4 H7.4 M10.4 4.6 V11.4 M7 8 H13.8" stroke="#9b3fb5" stroke-width="1.2"/></svg>
<span class="t" id="t43" style="left:1453.5px;top:270.0px;font-size:12px;line-height:16px;color:#1e1e1e;letter-spacing:0.602px;">c-demo1.cpp</span>
<svg class="a" style="left:1415px;top:290px" width="16" height="16" viewBox="0 0 16 16"><path d="M0.8 2 H6 L7.2 3.6 H13.4 V11.6 H0.8 Z" fill="#dcb67a" stroke="#b98d3a" stroke-width="1"/><path d="M0.8 5 H13.4" stroke="#b98d3a" stroke-width="0.8"/><path d="M6.6 7.4 H14.4 L11.6 10.6 V14.4 L9.4 13.4 V10.6 Z" fill="#f5f5f7" stroke="#1a6fc4" stroke-width="1.2"/></svg>
<span class="t" id="t44" style="left:1435px;top:290.0px;font-size:12px;line-height:16px;color:#1e1e1e;letter-spacing:-0.004px;">资源文件</span>
<div class="a" style="left:0px;top:895px;width:1717px;height:22px;background:#0067c0;"></div>
<svg class="a" style="left:5px;top:899px" width="18" height="17" viewBox="0 0 18 17"><path d="M0.8 0.8 H15.6 V12 H10.2 L8.2 14.4 L6.2 12 H0.8 Z" fill="none" stroke="#ffffff" stroke-width="1.2"/></svg>
<span class="t" id="t45" style="left:29px;top:900.5px;font-size:12px;line-height:16px;color:#ffffff;letter-spacing:-0.008px;">就绪</span>
<svg class="a" style="left:1411px;top:899px" width="12" height="15" viewBox="0 0 12 15"><path d="M6 14.5 V1.5 M1.2 6.2 L6 1.2 L10.8 6.2" fill="none" stroke="#ffffff" stroke-width="1.2"/></svg>
<span class="t" id="t46" style="left:1432px;top:900.5px;font-size:12px;line-height:16px;color:#ffffff;letter-spacing:-0.127px;">添加到源代码管理</span>
<svg class="a" style="left:1535px;top:905px" width="8" height="5" viewBox="0 0 8 5"><path d="M0 5 H8 L4 0.5 Z" fill="#ffffff"/></svg>
<svg class="a" style="left:1564px;top:900px" width="15" height="14" viewBox="0 0 15 14"><path d="M0.8 0.8 H14.2 V4.2 H0.8 Z M2.4 4.4 V13.2 H12.6 V4.4 M5.4 6.2 V10.2 H9.6 V6.2" fill="none" stroke="#ffffff" stroke-width="1.2"/></svg>
<span class="t" id="t47" style="left:1585.5px;top:900.5px;font-size:12px;line-height:16px;color:#ffffff;letter-spacing:0.121px;">选择仓库</span>
<svg class="a" style="left:1641px;top:905px" width="8" height="5" viewBox="0 0 8 5"><path d="M0 5 H8 L4 0.5 Z" fill="#ffffff"/></svg>
<svg class="a" style="left:1670px;top:899px" width="15" height="16" viewBox="0 0 15 16"><path d="M2 12.2 H13 C11.6 10.8 11.6 9 11.6 6.4 C11.6 3.4 9.8 1.4 7.5 1.4 C5.2 1.4 3.4 3.4 3.4 6.4 C3.4 9 3.4 10.8 2 12.2 Z M5.8 13.2 C6 15 9 15 9.2 13.2" fill="none" stroke="#ffffff" stroke-width="1.2"/></svg>
<svg class="a" style="left:1705px;top:908px" width="8" height="8" viewBox="0 0 8 8"><rect x="6" y="0" width="1" height="1" fill="#a9cbea"/><rect x="6" y="2" width="1" height="1" fill="#a9cbea"/><rect x="4" y="2" width="1" height="1" fill="#a9cbea"/><rect x="6" y="4" width="1" height="1" fill="#a9cbea"/><rect x="4" y="4" width="1" height="1" fill="#a9cbea"/><rect x="2" y="4" width="1" height="1" fill="#a9cbea"/><rect x="6" y="6" width="1" height="1" fill="#a9cbea"/><rect x="4" y="6" width="1" height="1" fill="#a9cbea"/><rect x="2" y="6" width="1" height="1" fill="#a9cbea"/><rect x="0" y="6" width="1" height="1" fill="#a9cbea"/></svg>
</body></html>
